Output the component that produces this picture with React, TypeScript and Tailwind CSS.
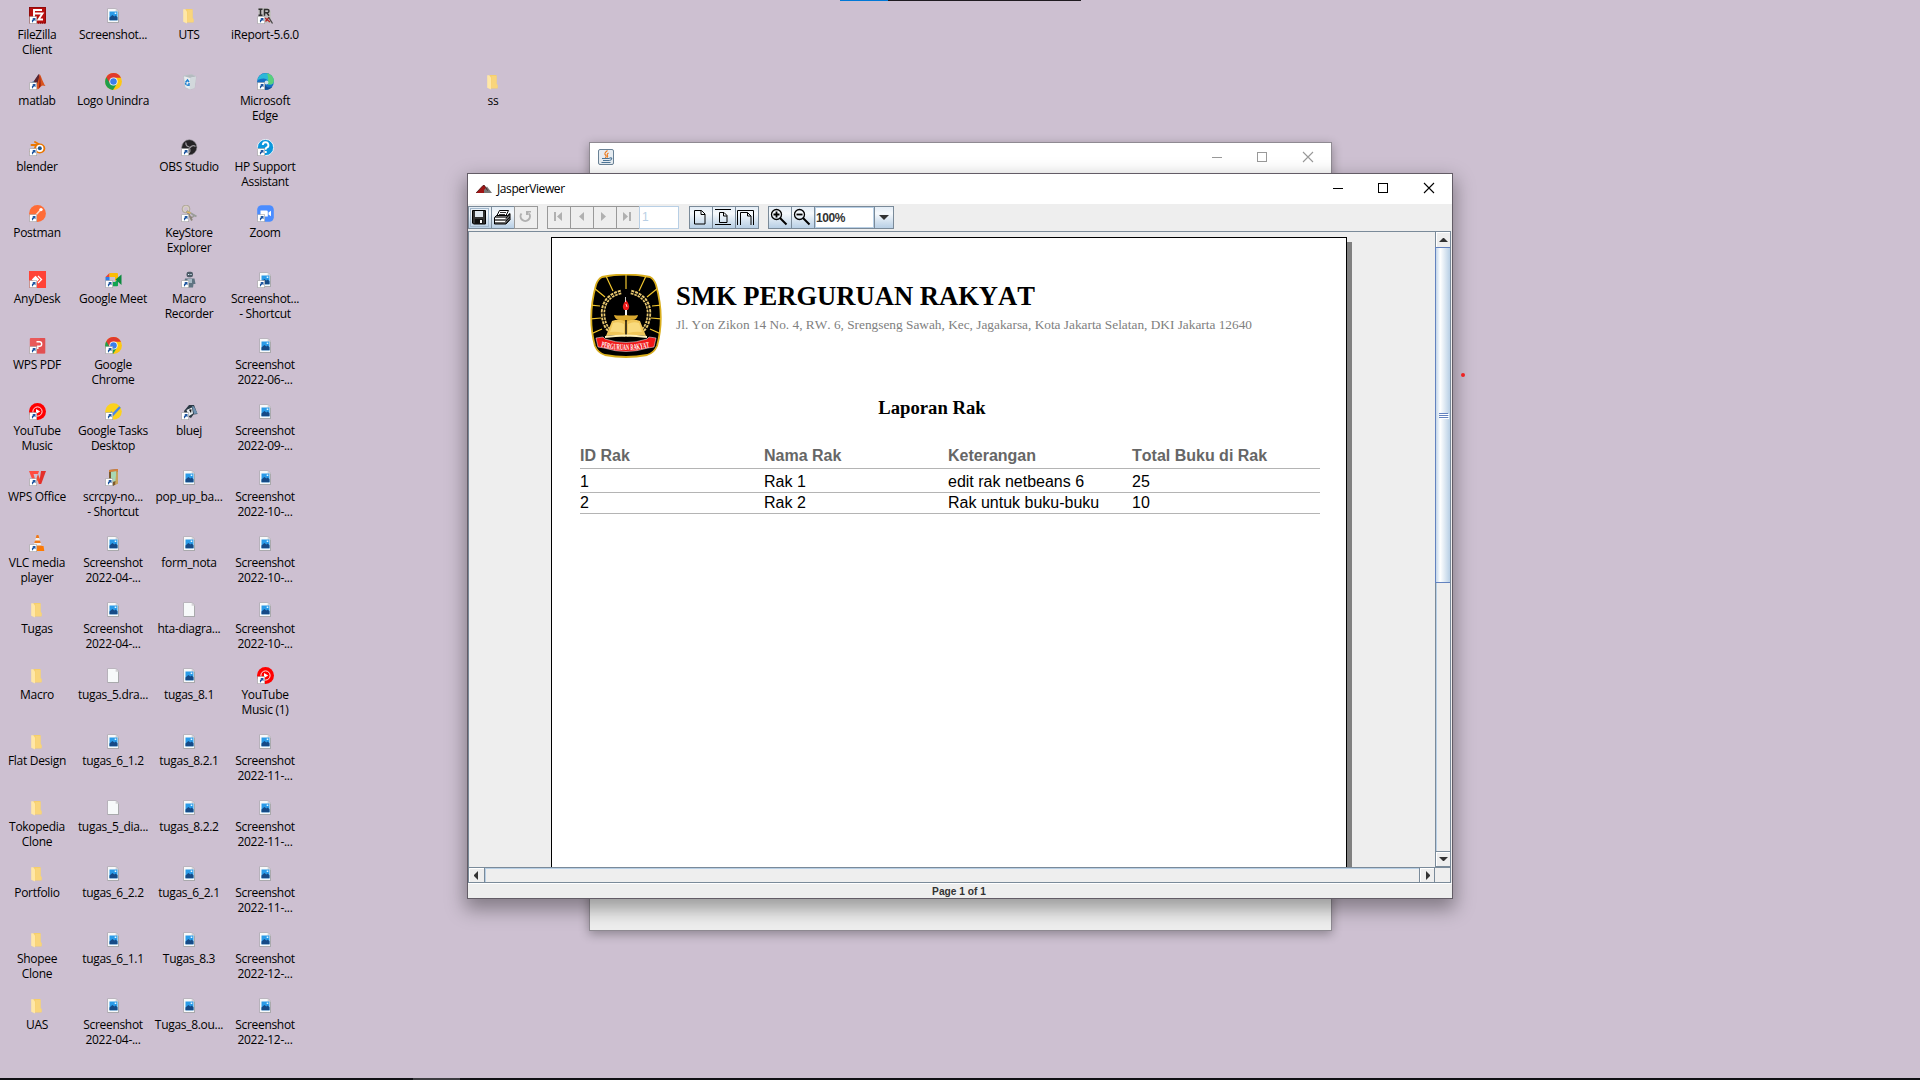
import React from "react";

type Label = string[];
type Item = { icon: string; label: Label; shortcut?: boolean } | null;

const f = (icon: string, ...label: string[]): Item => ({ icon, label });
const s = (icon: string, ...label: string[]): Item => ({ icon, label, shortcut: true });

const columns: Item[][] = [
  [
    s("filezilla", "FileZilla", "Client"),
    s("matlab", "matlab"),
    s("blender", "blender"),
    s("postman", "Postman"),
    s("anydesk", "AnyDesk"),
    s("wpspdf", "WPS PDF"),
    s("ytmusic", "YouTube", "Music"),
    s("wps", "WPS Office"),
    s("vlc", "VLC media", "player"),
    f("folder", "Tugas"),
    f("folder", "Macro"),
    f("folder", "Flat Design"),
    f("folder", "Tokopedia", "Clone"),
    f("folder", "Portfolio"),
    f("folder", "Shopee", "Clone"),
    f("folder", "UAS"),
  ],
  [
    f("image", "Screenshot..."),
    f("chrome", "Logo Unindra"),
    null,
    null,
    s("meet", "Google Meet"),
    s("chrome", "Google", "Chrome"),
    s("tasks", "Google Tasks", "Desktop"),
    s("scrcpy", "scrcpy-no...", "- Shortcut"),
    f("image", "Screenshot", "2022-04-..."),
    f("image", "Screenshot", "2022-04-..."),
    f("blank", "tugas_5.dra..."),
    f("image", "tugas_6_1.2"),
    f("blank", "tugas_5_dia..."),
    f("image", "tugas_6_2.2"),
    f("image", "tugas_6_1.1"),
    f("image", "Screenshot", "2022-04-..."),
  ],
  [
    f("folder", "UTS"),
    f("bin", ""),
    s("obs", "OBS Studio"),
    s("keystore", "KeyStore", "Explorer"),
    s("macro", "Macro", "Recorder"),
    null,
    s("bluej", "bluej"),
    f("image", "pop_up_ba..."),
    f("image", "form_nota"),
    f("blank", "hta-diagra..."),
    f("image", "tugas_8.1"),
    f("image", "tugas_8.2.1"),
    f("image", "tugas_8.2.2"),
    f("image", "tugas_6_2.1"),
    f("image", "Tugas_8.3"),
    f("image", "Tugas_8.ou..."),
  ],
  [
    s("ireport", "iReport-5.6.0"),
    s("edge", "Microsoft", "Edge"),
    s("hp", "HP Support", "Assistant"),
    s("zoom", "Zoom"),
    s("image", "Screenshot...", "- Shortcut"),
    f("image", "Screenshot", "2022-06-..."),
    f("image", "Screenshot", "2022-09-..."),
    f("image", "Screenshot", "2022-10-..."),
    f("image", "Screenshot", "2022-10-..."),
    f("image", "Screenshot", "2022-10-..."),
    s("ytmusic", "YouTube", "Music (1)"),
    f("image", "Screenshot", "2022-11-..."),
    f("image", "Screenshot", "2022-11-..."),
    f("image", "Screenshot", "2022-11-..."),
    f("image", "Screenshot", "2022-12-..."),
    f("image", "Screenshot", "2022-12-..."),
  ],
];

const Page = () => (
  <>
    <path d="M2.400 1.500h8.800l2.800 2.800V16H2.400z" fill="#a9a9ac" />
    <path d="M3 2h7.800l2.200 2.200V15H3z" fill="#f7f9fa" />
    <path d="M10.600 1.500v3.200H14z" fill="#d4d2d6" />
  </>
);

const glyphs: Record<string, React.ReactNode> = {
  filezilla: (
    <>
      <rect width="17" height="16.5" fill="#b80f0f" />
      <rect x=".5" y=".5" width="16" height="15.5" fill="none" stroke="#6e0808" strokeDasharray="1 1" />
      <path d="M5 11V3h8M5 6.5h5M8.5 6.5h5l-4 6h4.5" fill="none" stroke="#fff" strokeWidth="1.9" />
    </>
  ),
  matlab: (
    <>
      <path d="M1 10l4-2 5-7-2 10-3 4z" fill="#3c6f9e" />
      <path d="M5 8l4-6 1-1 0 8-3 5z" fill="#5b2430" />
      <path d="M10.500 1c1.500 1 3 8 6 12-2-.5-3-1-4 0-1.500 1-2.500 3-4 3.500L7 12c2-2 3-7 3.500-11z" fill="#d9531e" />
      <path d="M10.500 1c1 3 1 8 1.200 12l-2 2.500c1-5 1-10 .8-14.500z" fill="#8e1d16" />
    </>
  ),
  blender: (
    <>
      <path d="M6 3l7 4M2.500 6h7M1.500 12.500L8 8" stroke="#ea7600" strokeWidth="1.900" strokeLinecap="round" />
      <ellipse cx="10.700" cy="9.500" rx="5.600" ry="5" fill="#ea7600" />
      <circle cx="10.800" cy="9.300" r="3.600" fill="#fff" />
      <circle cx="10.800" cy="9.300" r="2" fill="#265787" />
    </>
  ),
  postman: (
    <>
      <circle cx="8.500" cy="8.500" r="8.400" fill="#ff6c37" />
      <path d="M5 12l6.500-7" stroke="#ffd8c8" strokeWidth="1.600" />
      <circle cx="12" cy="4.600" r="1.700" fill="#fff" />
    </>
  ),
  anydesk: (
    <>
      <rect width="17" height="17" fill="#ff4336" />
      <path d="M2.800 8.500l3.700-3.700 3.700 3.700-3.700 3.700z" fill="#fff" />
      <path d="M9 5l3.500 3.500L9 12" fill="none" stroke="#fff" strokeWidth="1.300" />
    </>
  ),
  wpspdf: (
    <>
      <rect x=".8" y="1" width="15.400" height="15.500" rx="1" fill="#e95a5a" />
      <path d="M11 1h5.200v15.500H8z" fill="#dd4a4d" opacity=".6" />
      <path d="M7.500 4.800h3a2.200 2.200 0 010 4.400H8.800V12" fill="none" stroke="#fff" strokeWidth="1.400" />
    </>
  ),
  ytmusic: (
    <>
      <circle cx="8.500" cy="8.500" r="8.500" fill="#f00" />
      <circle cx="8.500" cy="8.500" r="4.600" fill="none" stroke="#fff" strokeWidth=".9" />
      <path d="M7 6l4.200 2.500L7 11z" fill="#fff" />
    </>
  ),
  wps: (
    <>
      <path d="M0 2h10l-1 3H4.500l3 10H5z" fill="#ff4b3e" />
      <path d="M5.500 15L9 5l3.200 8.500L11.500 15H9.800L8.500 11l-1.300 4z" fill="#f5492f" />
      <path d="M12 2h5l-4.800 13H10z" fill="#e4302a" />
    </>
  ),
  vlc: (
    <>
      <path d="M3.500 11h11l.8 5H2.500z" fill="#ff7a00" />
      <path d="M7.600 0h1.800l3.600 12.500c-2 1.500-7 1.500-9 0z" fill="#f07818" />
      <path d="M6.700 3h3.600l.8 2.600H5.900zM5.200 8h6.600l.8 2.500H4.500z" fill="#f3f0ee" />
    </>
  ),
  folder: (
    <>
      <path d="M4.500 2h7v9.500l1 .5v3.500H4z" fill="#f6cf6a" />
      <path d="M6.500 3h5v8l1 .8V15H6z" fill="#f9d57b" />
      <path d="M2.200 2.200h2L6 4.500v12L2.200 14.800z" fill="#ffe7a6" />
    </>
  ),
  image: (
    <>
      <Page />
      <rect x="4.500" y="4.500" width="8" height="8.800" fill="#2a9be8" />
      <path d="M4.500 10.500l2.900-2.400 2 1.400 1.300-1 1.800 1.700v3.100h-8z" fill="#164a86" />
      <rect x="9.700" y="5.500" width="1.600" height="1.500" fill="#e6f6ff" />
    </>
  ),
  blank: <Page />,
  chrome: (
    <>
      <circle cx="8.500" cy="8.500" r="8.400" fill="#fdc711" />
      <path d="M8.500 8.500L1.300 4.200A8.400 8.400 0 008 16.900L12.100 10.600z" fill="#1f9d4d" />
      <path d="M1.300 4.200A8.400 8.400 0 0116 4.700H8.500L5 10.500z" fill="#e13a2e" />
      <circle cx="8.500" cy="8.500" r="4.100" fill="#fff" />
      <circle cx="8.500" cy="8.500" r="3.300" fill="#3b7eea" />
    </>
  ),
  meet: (
    <>
      <path d="M.5 6L4.500 2v4z" fill="#ea4335" />
      <path d="M.5 6h4v9h-3a1 1 0 01-1-1z" fill="#2b7de9" />
      <path d="M4.500 2h7.500q1 0 1 1v5l-3 2V6H4.500z" fill="#fbbc04" />
      <path d="M4.500 11H10l3-3v6.500q0 .8-1 .8H4.500z" fill="#12a451" />
      <path d="M10.500 8.500L16.500 3.500v10.500z" fill="#0b8a3e" />
    </>
  ),
  tasks: (
    <>
      <circle cx="8.500" cy="8.500" r="8.300" fill="#fcd21d" />
      <path d="M5.500 9l2.500 2.500 7-7.500" fill="none" stroke="#4a86e8" strokeWidth="2.400" />
    </>
  ),
  scrcpy: (
    <>
      <path d="M4 1l9-1v14l-5 3-4-3z" fill="#7c5a2c" />
      <path d="M6 2.500l5.500-.7v10L6 13.500z" fill="#a8d8b4" />
      <path d="M11.500 1.800l1.500.8v12l-3 1.400z" fill="#c8a45c" />
      <path d="M4 1l9-1v2L4 3z" fill="#d9813c" />
    </>
  ),
  bin: (
    <>
      <path d="M2.500 3l8-1.500 4.500 2-1.500 11.500-5 1.500-4.500-2z" fill="#e9edf0" stroke="#b4bbc0" strokeWidth=".6" />
      <path d="M2.500 3l8-1.500 4.500 2-6 1.500z" fill="#b4bbc0" />
      <path d="M9 5l6-1.500-1.500 11.500-5 1.500z" fill="#d2d8dc" />
      <path d="M4.500 9.500L6.500 7 8 9M8 10v2.200L5.500 12M4.500 10l.5 1.800" stroke="#1c7fd0" strokeWidth="1.400" fill="none" />
    </>
  ),
  obs: (
    <>
      <circle cx="8.300" cy="8.300" r="7.600" fill="#252326" stroke="#8d8a90" strokeWidth=".6" />
      <path d="M5 3.500a3.400 3.400 0 003.500 4.300M14.500 7.500A3.400 3.400 0 009 9M7 14.500a3.400 3.400 0 001-5.500" fill="none" stroke="#98959a" strokeWidth="1.300" />
    </>
  ),
  keystore: (
    <>
      <circle cx="5" cy="4" r="3" fill="none" stroke="#d8d0c2" strokeWidth="2" />
      <circle cx="5" cy="4" r="3.900" fill="none" stroke="#93897b" strokeWidth=".6" />
      <path d="M6 6l5 9.500M9.500 13l2-1" stroke="#8c8478" strokeWidth="1.800" />
      <path d="M6 6l9.500 5.500M13 10l-1 2" stroke="#9a9c98" strokeWidth="1.900" />
      <path d="M6 7l3.500 1" stroke="#e0b860" strokeWidth="1.800" />
    </>
  ),
  macro: (
    <>
      <rect x="5.500" y=".8" width="6.500" height="5.500" rx="2.200" fill="#4d5b67" />
      <path d="M4 7.500h9.500l1 5.500h-2l-.5 3.500H6L5 13H3z" fill="#5f7482" />
      <rect x="6.500" y="8" width="4.500" height="4" fill="#a9bac6" />
      <path d="M7 3.500h1.300M9.400 3.500h1.200" stroke="#dff3ff" strokeWidth="1.200" />
    </>
  ),
  bluej: (
    <>
      <path d="M3 8l5-6 5 0 3.500 9-4 .5L10 15l-6-3z" fill="#2b3945" />
      <path d="M5.500 7l5.500-2.500 1 6-4 2.500z" fill="#e9eef2" />
      <path d="M11 3l2 .5L16.500 10.500 13 11z" fill="#6f93b3" />
      <path d="M8 6.800l2.500-.6-.5 4z" fill="#111" />
    </>
  ),
  ireport: (
    <>
      <path d="M1 1h10l3 3v12H2z" fill="#c2bfc0" />
      <path d="M1.500 2.300h4M3.500 2.300v6M1.500 8.200h4M7.500 8.700V2.500h2.800q1.700 0 1.700 1.600T10.300 5.800H7.500M9.800 5.800l2.200 3" stroke="#2e2e2e" strokeWidth="1.500" fill="none" />
      <path d="M8 11l5 4M12 10.500l-3.500 4" stroke="#b32626" strokeWidth="1.300" />
      <path d="M11.500 10l4 6.500" stroke="#444" strokeWidth="1.300" />
    </>
  ),
  edge: (
    <>
      <circle cx="8.500" cy="8.500" r="8.400" fill="#1570c4" />
      <path d="M.3 7A8.400 8.400 0 0116.900 8c0 2.500-2 3.600-4.200 3.600-2.200 0-2.500-1-2-1.800C11.500 7 9 5.500 6.500 5.500 3 5.500.8 7.500.3 7z" fill="#2cb8d8" />
      <path d="M10 .3A8.400 8.400 0 0116.900 8c0 2.500-2 3.600-4.200 3.600-2.200 0-2.500-1-2-1.800 1-2 .5-6-.7-9.500z" fill="#58d07b" />
      <path d="M7.500 9a5 5 0 008 4.500c-1.500 2.500-4.500 3.500-7.500 3.300C5 15 5 11 7.500 9z" fill="#124d91" />
      <ellipse cx="9.500" cy="9.500" rx="1.900" ry="2" fill="#cfe2ee" />
    </>
  ),
  hp: (
    <>
      <circle cx="8.500" cy="8.500" r="8.100" fill="#0a96dc" stroke="#fff" strokeWidth=".8" />
      <path d="M5.800 6a2.800 2.800 0 113.800 2.700q-1 .5-1 2" fill="none" stroke="#fff" strokeWidth="1.900" />
      <rect x="7.700" y="12" width="2" height="2" fill="#fff" />
    </>
  ),
  zoom: (
    <>
      <rect x=".2" y=".2" width="16.600" height="16.600" rx="4.500" fill="#4a8cff" />
      <path d="M3.500 5.500h6q1.300 0 1.300 1.300v4.700H5q-1.500 0-1.500-1.300z" fill="#fff" />
      <path d="M11.500 7.500l2.500-1.800v5.600l-2.500-1.800z" fill="#fff" />
    </>
  ),
};

function DesktopIcon({ item }: { item: Item }) {
  if (!item) return <div className="h-[66px] w-[75px]" />;
  return (
    <div className="flex h-[66px] w-[75px] flex-col items-center pt-[7px]">
      <svg width="17" height="17" viewBox="0 0 17 17" className="shrink-0">
        {glyphs[item.icon]}
        {item.shortcut && (
          <>
            <rect x=".7" y="9.700" width="7" height="7" fill="#fff" stroke="#a5a5a5" strokeWidth=".6" />
            <path d="M3.200 11h3.300v3.300l-1.100-1.100q-1.600.8-1.600 2.600-2.200-2 .5-3.700z" fill="#1f56a0" />
          </>
        )}
      </svg>
      <div className="mt-[3px] pr-px text-center text-[12px] leading-[15px] tracking-[-0.3px] whitespace-nowrap text-black">
        {item.label.map((line, i) => (
          <div key={i}>{line}</div>
        ))}
      </div>
    </div>
  );
}

function WindowControls() {
  return (
    <svg width="114" height="30" viewBox="0 0 114 30" fill="none" stroke="currentColor" shapeRendering="crispEdges">
      <path d="M4 14.500h10" />
      <rect x="49.500" y="9.500" width="9" height="9" />
      <path d="M95 9l10 10M105 9l-10 10" shapeRendering="auto" strokeWidth="1.100" />
    </svg>
  );
}

function ToolButton({ disabled, focused, children }: { disabled?: boolean; focused?: boolean; children: React.ReactNode }) {
  return (
    <div
      className={
        disabled
          ? "-mr-px h-[23px] w-6 border border-[#999999] bg-[#eeeeee] text-[#b0b0b0]"
          : "-mr-px h-[23px] w-6 border border-[#7a8a99] bg-linear-to-b from-[#e4edf6] via-[#f6f9fc] via-30% to-[#b8cfe5] text-black"
      }
    >
      <svg width="23" height="23" viewBox="0 0 23 23" fill="none" stroke="currentColor" className="-m-px">
        {focused && <rect x="2.500" y="2.500" width="18" height="18" stroke="#a3b8cc" />}
        {children}
      </svg>
    </div>
  );
}

function Toolbar() {
  return (
    <div className="flex h-[27px] shrink-0 items-start bg-[#eeeeee] pt-[2px]">
      <ToolButton focused>
        <path d="M4.500 4.500h13v13.500h-12l-1-1z" fill="#333" />
        <path d="M7 5h8v6H7z" fill="#dfe7ef" stroke="none" />
        <path d="M7 13h8v5H7z" fill="#111" stroke="none" />
        <path d="M12 14h2v3h-2z" fill="#fff" stroke="none" />
      </ToolButton>
      <ToolButton>
        <path d="M8.500 4.500h9l-3 6h-9z" fill="#fff" />
        <path d="M9 6.500h6M8 8.500h6" strokeWidth=".8" />
        <path d="M3.500 11.500l2-2h11l2.500-2v6l-4 4.500h-11.500z" fill="#666" />
        <path d="M4 12.500h10.500M4 15.500h10" stroke="#fff" />
        <path d="M15 12l4-4M15 15l4-4M15 17.500l4-4" strokeWidth=".8" />
      </ToolButton>
      <ToolButton disabled>
        <path d="M7.500 7.500a4.700 4.700 0 107.500 0" strokeWidth="2" />
        <path d="M12 5h5v1.500h-2.500V9H12z" fill="currentColor" stroke="none" />
      </ToolButton>
      <div className="w-[10px]" />
      <ToolButton disabled>
        <path d="M7 6h2v9H7zM15 6v9l-5-4.500z" fill="currentColor" stroke="none" />
      </ToolButton>
      <ToolButton disabled>
        <path d="M14 6v9l-5-4.500z" fill="currentColor" stroke="none" />
      </ToolButton>
      <ToolButton disabled>
        <path d="M8 6v9l5-4.500z" fill="currentColor" stroke="none" />
      </ToolButton>
      <ToolButton disabled>
        <path d="M7 6v9l5-4.500zM13 6h2v9h-2z" fill="currentColor" stroke="none" />
      </ToolButton>
      <div className="h-[23px] w-10 border border-[#b8cfe5] bg-white pl-[2px] font-['Liberation_Sans'] text-[12px] leading-[21px] text-[#b8cfe5]">
        1
      </div>
      <div className="w-[10px]" />
      <ToolButton>
        <path d="M5.500 4.500h7l3.500 3.500v10H5.500z" />
        <path d="M12 4.500V8.500h4" />
      </ToolButton>
      <ToolButton>
        <path d="M3 3.500h16M3 18.500h16" />
        <path d="M7.500 6.500h4.500l3 3v7h-7.500z" />
        <path d="M11.500 6.500v3.500h3.500" />
      </ToolButton>
      <ToolButton>
        <path d="M2.500 19V4.500h16V19" />
        <path d="M5.500 19V6.500h7l3.500 3.500v9" />
        <path d="M12.500 6.500v3.500h3.500" />
      </ToolButton>
      <div className="w-[10px]" />
      <ToolButton>
        <circle cx="8.500" cy="8.500" r="5" strokeWidth="1.300" />
        <path d="M5.500 8.500h6M8.500 5.500v6" strokeWidth="1.800" />
        <path d="M12 12l6.500 6.500" strokeWidth="2" />
      </ToolButton>
      <ToolButton>
        <circle cx="8.500" cy="8.500" r="5" strokeWidth="1.300" />
        <path d="M5.500 8.500h6" strokeWidth="1.800" />
        <path d="M12 12l6.500 6.500" strokeWidth="2" />
      </ToolButton>
      <div className="h-[23px] w-[61px] border border-[#7a8a99] bg-white pl-px font-['Liberation_Sans'] text-[12px] leading-[22px] font-bold tracking-[-0.4px] text-[#333333] shadow-[inset_0_0_0_1px_#b8cfe5]">
        100%
      </div>
      <div className="-ml-px flex h-[23px] w-5 items-center justify-center border border-[#7a8a99] bg-linear-to-b from-[#e4edf6] via-[#f6f9fc] via-30% to-[#b8cfe5]">
        <svg width="10" height="5" viewBox="0 0 10 5">
          <path d="M0 0h10L5 5z" fill="#333" />
        </svg>
      </div>
    </div>
  );
}

function SchoolLogo() {
  return (
    <svg width="72" height="84" viewBox="0 0 72 84" className="-ml-px">
      <defs>
        <clipPath id="shield">
          <path d="M12 3Q36-2 60 3 64 5 66 11 75 43 67 72 64 79 57 81 36 85 15 81 8 79 5 72-3 43 6 11 8 5 12 3z" />
        </clipPath>
      </defs>
      <path d="M12 3Q36-2 60 3 64 5 66 11 75 43 67 72 64 79 57 81 36 85 15 81 8 79 5 72-3 43 6 11 8 5 12 3z" fill="#000" stroke="#d8ad1c" strokeWidth="1.800" />
      <g clipPath="url(#shield)" stroke="#f0c52e" strokeWidth="1.200">
        <path d="M36 0v15M16 2l7 15M56 2l-7 15M4 14l11 9M68 14L57 23M0 31l10 1M72 31l-10 1M0 45l11-1M72 45l-11-1M1 60l11-5M71 60l-11-5" />
      </g>
      <g fill="none" stroke="#e8c870" strokeWidth="4.400" strokeDasharray="2.800 1">
        <path d="M31 18Q14 22 13 38 13 50 19 56" />
        <path d="M41 18Q58 22 59 38 59 50 53 56" />
      </g>
      <g fill="none" stroke="#000" strokeWidth=".9">
        <path d="M31 18Q14 22 13 38 13 50 19 56M41 18Q58 22 59 38 59 50 53 56" />
      </g>
      <path d="M36 26q5 6 2 10h-4q-3-4 2-10z" fill="#ee1c1c" />
      <path d="M35.500 23v5M36 30l1 3" stroke="#fff" strokeWidth=".8" />
      <path d="M35 36h2v6h-2z" fill="#f5f5f5" />
      <path d="M24 41q6 1 12 0 6 1 12 0-1 5-6 5l-1 3H31l-1-3q-5 0-6-5z" fill="#d9a82f" />
      <path d="M22 47q8-3 14 1 6-4 14-1l6 15q-11-2-20 1-9-3-20-1z" fill="#f0c659" />
      <path d="M23 49q6-2 11 1v9q-8-2-14-1zM49 49q-6-2-11 1v9q8-2 14-1z" fill="#f9da7d" />
      <path d="M36 46v17" stroke="#000" strokeWidth="1.400" />
      <path d="M15 62q21-3 42 0v2q-21-3-42 0z" fill="#fff0b8" />
      <path d="M6 64l7-1 2 2q21 7 42 0l2-2 7 1-2 9-6 1q-22 7-44 0l-6-1z" fill="#f01818" stroke="#fff" strokeWidth=".5" />
      <path id="ribbon" d="M11 73q25 6 50 0" fill="none" />
      <text fill="#fff" fontFamily="Liberation Serif" fontWeight="bold" fontSize="8.500" textLength="49" lengthAdjust="spacingAndGlyphs">
        <textPath href="#ribbon" textLength="49" lengthAdjust="spacingAndGlyphs">
          PERGURUAN RAKYAT
        </textPath>
      </text>
    </svg>
  );
}

const rows = [
  ["1", "Rak 1", "edit rak netbeans 6", "25"],
  ["2", "Rak 2", "Rak untuk buku-buku", "10"],
];

function Report() {
  return (
    <div className="mt-[5px] ml-[82px] flex">
      <div className="h-[640px] w-[796px] border border-black bg-white pl-[28px] [font-kerning:none]">
        <div className="flex pt-[36px] pl-[11px]">
          <SchoolLogo />
          <div className="ml-[14px] font-['Liberation_Serif'] whitespace-nowrap">
            <div className="mt-[7px] text-[26.6px] leading-[31px] font-bold text-black">SMK PERGURUAN RAKYAT</div>
            <div className="mt-[5px] text-[13.32px] leading-[16px] text-[#808080]">
              Jl. Yon Zikon 14 No. 4, RW. 6, Srengseng Sawah, Kec, Jagakarsa, Kota Jakarta Selatan, DKI Jakarta 12640
            </div>
          </div>
        </div>
        <div className="mt-[39px] w-[704px] text-center font-['Liberation_Serif'] text-[18.67px] leading-[22px] font-bold text-black">
          Laporan Rak
        </div>
        <div className="mt-[26px] w-[740px] font-['Liberation_Sans'] text-[16px] whitespace-nowrap">
          <div className="grid h-[24px] border-b border-[#b4b4b4] leading-[22px] font-bold text-[#666666] [grid-template-columns:184px_184px_184px_188px]">
            <div>ID Rak</div>
            <div>Nama Rak</div>
            <div>Keterangan</div>
            <div>Total Buku di Rak</div>
          </div>
          {rows.map((r, i) => (
            <div
              key={r[0]}
              className={
                i === 0
                  ? "grid h-[24px] border-b border-[#b4b4b4] pt-[4px] leading-[18px] text-black [grid-template-columns:184px_184px_184px_188px]"
                  : "grid h-[21px] border-b border-[#b4b4b4] pt-px leading-[18px] text-black [grid-template-columns:184px_184px_184px_188px]"
              }
            >
              {r.map((c) => (
                <div key={c}>{c}</div>
              ))}
            </div>
          ))}
        </div>
      </div>
      <div className="mt-[5px] h-[640px] w-[5px] bg-[#808080]" />
    </div>
  );
}

function JasperWindow() {
  return (
    <div className="absolute top-[173px] left-[467px] flex h-[726px] w-[986px] flex-col border border-[#635c66] bg-[#eeeeee] shadow-[0_8px_18px_2px_rgba(0,0,0,0.36)]">
      <div className="flex h-[30px] shrink-0 items-center justify-between bg-white">
        <div className="flex items-center pl-[8px]">
          <svg width="16" height="9" viewBox="0 0 16 9">
            <path d="M0 8L7 .5h1.500L13 8z" fill="#9e1414" />
            <path d="M8 5l3-3.500L16 8H8z" fill="#777" />
            <path d="M0 8L7 .5h1.500l3 5" fill="none" stroke="#300" strokeWidth=".7" />
          </svg>
          <div className="ml-[5px] text-[12px] leading-[16px] tracking-[-0.4px] text-black">JasperViewer</div>
        </div>
        <div className="mr-[9px] text-black">
          <WindowControls />
        </div>
      </div>
      <Toolbar />
      <div className="flex h-[636px] w-[983px] shrink-0 border-t border-l border-[#7a8a99]">
        <div className="h-[635px] w-[966px] overflow-hidden">
          <Report />
        </div>
        <div className="flex w-4 flex-col border-x border-[#7a8a99]">
          <div className="flex h-[15px] items-center justify-center border-t border-l border-white">
            <svg width="9" height="4" viewBox="0 0 9 4">
              <path d="M0 4L4 0h1l4 4z" fill="#333" />
            </svg>
          </div>
          <div className="-ml-px flex h-[336px] w-[15px] flex-col items-center justify-center gap-px border-y border-l border-[#6382bf] bg-linear-to-r from-[#c3d6ea] via-white via-30% to-[#b8cfe5]">
            <div className="h-px w-[9px] bg-[#6382bf] shadow-[1px_1px_0_#fff]" />
            <div className="h-px w-[9px] bg-[#6382bf] shadow-[1px_1px_0_#fff]" />
            <div className="h-px w-[9px] bg-[#6382bf] shadow-[1px_1px_0_#fff]" />
          </div>
          <div className="flex-1 border-l border-[#b8cfe5]" />
          <div className="flex h-[16px] items-center justify-center border-y border-t-[#7a8a99] border-b-[#7a8a99] shadow-[inset_1px_1px_0_#fff]">
            <svg width="9" height="4" viewBox="0 0 9 4">
              <path d="M0 0h9L5 4H4z" fill="#333" />
            </svg>
          </div>
        </div>
      </div>
      <div className="flex h-[16px] w-[983px] shrink-0 border border-[#7a8a99]">
        <div className="flex w-[15px] items-center justify-center border-t border-l border-white pr-[2px]">
          <svg width="4" height="9" viewBox="0 0 4 9">
            <path d="M4 0v9L0 5V4z" fill="#333" />
          </svg>
        </div>
        <div className="flex-1 border-x border-[#7a8a99] shadow-[inset_1px_1px_0_#b8cfe5]" />
        <div className="flex w-[14px] items-center justify-center border-t border-l border-white">
          <svg width="4" height="9" viewBox="0 0 4 9">
            <path d="M0 0v9l4-4V4z" fill="#333" />
          </svg>
        </div>
        <div className="w-[16px] border-l border-[#7a8a99]" />
      </div>
      <div className="flex-1 overflow-hidden border-t border-white pr-[2px] text-center font-['Liberation_Sans'] text-[10.2px] leading-[15px] font-bold text-[#333333]">
        Page 1 of 1
      </div>
    </div>
  );
}

function BackWindow() {
  return (
    <div className="absolute top-[142px] left-[589px] h-[789px] w-[743px] border border-[#8f8a92] bg-[#eeeeee] shadow-[0_3px_10px_rgba(0,0,0,0.32)]">
      <div className="flex h-[30px] items-center justify-between bg-white pl-[8px]">
        <svg width="16" height="16" viewBox="0 0 16 16" className="-mt-[2px]">
          <rect x=".5" y=".5" width="15" height="15" rx="1.500" fill="#e6ecf1" stroke="#6a8296" />
          <path d="M9.500 1.500q-4 3-2 4.500 1.500 1.500-.3 3M10.500 4q-2 1.200-1 2.500.6 1-.4 2" fill="none" stroke="#ee7a1a" strokeWidth="1.100" />
          <path d="M4 9.500h7.500M5 11.500h6M3.500 13.500h9M11.500 9q3-.5 2 1.200-.7 1-2.300 1.300" fill="none" stroke="#4d7698" strokeWidth="1.100" />
        </svg>
        <div className="mr-[9px] text-[#999999]">
          <WindowControls />
        </div>
      </div>
    </div>
  );
}

export default function App() {
  return (
    <div className="relative h-[1080px] w-[1920px] overflow-hidden bg-[#cdc0d1] font-['Open_Sans',sans-serif]">
      <div className="flex gap-px">
        {columns.map((col, i) => (
          <div key={i} className="flex flex-col">
            {col.map((item, j) => (
              <DesktopIcon key={j} item={item} />
            ))}
          </div>
        ))}
      </div>
      <div className="absolute top-[66px] left-[456px]">
        <DesktopIcon item={f("folder", "ss")} />
      </div>
      <BackWindow />
      <JasperWindow />
      <div className="absolute top-[373px] left-[1461px] h-[4px] w-[4px] rounded-full bg-[#ee2222]" />
      <div className="absolute top-0 left-[840px] flex h-px w-[241px] bg-[#1f1b20]">
        <div className="w-[48px] bg-[#0078d7]" />
      </div>
      <div className="absolute bottom-0 left-0 flex h-[2px] w-full bg-[#101014] pl-[413px]">
        <div className="w-[47px] bg-[#3c3c40]" />
      </div>
    </div>
  );
}
